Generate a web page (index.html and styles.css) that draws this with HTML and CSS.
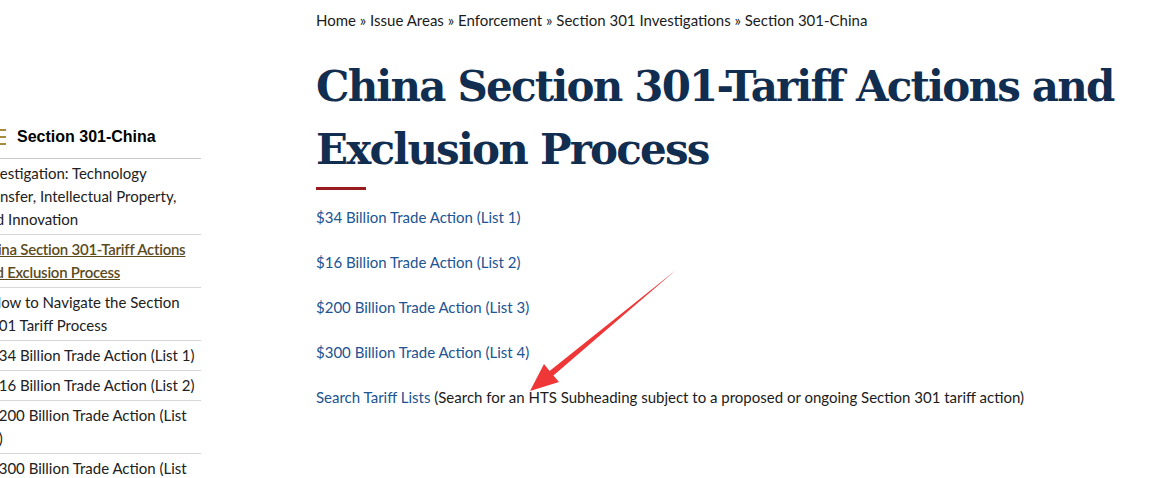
FILE: index.html
```html
<!DOCTYPE html>
<html lang="en">
<head>
    <meta charset="UTF-8">
    <meta name="viewport" content="width=device-width, initial-scale=1.0">
    <title>China Section 301-Tariff Actions and Exclusion Process</title>
    <link rel="stylesheet" href="styles.css">
</head>
<body>
    <div class="page">
        <aside class="sidenav">
            <div class="sidenav-title">
                <svg class="menu-icon" width="18" height="18" viewBox="0 0 18 18">
                    <rect x="0" y="1" width="18" height="2" fill="#a68b3c"/>
                    <rect x="0" y="8" width="18" height="2" fill="#a68b3c"/>
                    <rect x="0" y="15" width="18" height="2" fill="#a68b3c"/>
                </svg>
                <span>Section 301-China</span>
            </div>
            <ul class="nav-list">
                <li><a href="#">Investigation: Technology Transfer, Intellectual Property, and Innovation</a></li>
                <li class="current"><a href="#">China Section 301-Tariff Actions and Exclusion Process</a></li>
                <li class="child"><a href="#">How to Navigate the Section 301 Tariff Process</a></li>
                <li class="child"><a href="#">$34 Billion Trade Action (List 1)</a></li>
                <li class="child"><a href="#">$16 Billion Trade Action (List 2)</a></li>
                <li class="child"><a href="#">$200 Billion Trade Action (List 3)</a></li>
                <li class="child"><a href="#">$300 Billion Trade Action (List 4)</a></li>
            </ul>
        </aside>

        <main class="content">
            <div class="breadcrumb">
                <a href="#">Home</a> » <a href="#">Issue Areas</a> » <a href="#">Enforcement</a> » <a href="#">Section 301 Investigations</a> » Section 301-China
            </div>
            <h1>China Section 301-Tariff Actions and Exclusion Process</h1>
            <div class="rule"></div>
            <p><a href="#">$34 Billion Trade Action (List 1)</a></p>
            <p><a href="#">$16 Billion Trade Action (List 2)</a></p>
            <p><a href="#">$200 Billion Trade Action (List 3)</a></p>
            <p><a href="#">$300 Billion Trade Action (List 4)</a></p>
            <p><a href="#">Search Tariff Lists</a> (Search for an HTS Subheading subject to a proposed or ongoing Section 301 tariff action)</p>
        </main>
    </div>

    <!-- annotation arrow drawn over the page -->
    <svg class="arrow" width="1174" height="478" viewBox="0 0 1174 478">
        <polygon points="530,391 544,364 549.6,370.9 676,270 553.4,375.5 559,382" fill="#ef3737"/>
    </svg>
</body>
</html>
```

FILE: styles.css
```css
body {
    margin: 0;
    padding: 0;
    background: #fff;
    font-family: Lato, "Open Sans", sans-serif;
    font-size: 15px;
    color: #1b1b1b;
    overflow: hidden;
}

a {
    color: #205493;
    text-decoration: none;
}

.page {
    display: flex;
    align-items: flex-start;
}

/* side navigation */
.sidenav {
    flex: 0 0 225px;
    margin-left: -24px;
    margin-top: 120px;
    margin-right: 115px;
}

.sidenav-title {
    display: flex;
    align-items: center;
    gap: 11px;
    padding: 6px 0 10px 12px;
    border-bottom: 1px solid #c8c8c8;
    font-family: "Liberation Sans", Arial, sans-serif;
    font-weight: bold;
    font-size: 16px;
    line-height: 22px;
    color: #000;
}

.nav-list {
    list-style: none;
    margin: 0;
    padding: 0;
}

.nav-list li {
    border-bottom: 1px solid #d6d7d9;
    padding: 3px 0 3px 4px;
    line-height: 23px;
}

.nav-list li a {
    color: #212121;
}

.nav-list li.child {
    padding-left: 14px;
}

.nav-list li.current a {
    color: #5b4b1d;
    text-decoration: underline;
    font-weight: 600;
    letter-spacing: -0.25px;
}

/* main content */
.content {
    flex: 1;
    max-width: 830px;
    padding-top: 9px;
}

.breadcrumb {
    line-height: 22px;
}

.breadcrumb a {
    color: #1b1b1b;
}

h1 {
    font-family: "DejaVu Serif", Georgia, serif;
    font-weight: bold;
    font-size: 42px;
    letter-spacing: -1.8px;
    line-height: 63px;
    color: #112e51;
    margin: 24px 0 6px;
}

.rule {
    width: 50px;
    height: 3px;
    background: #981b1e;
    margin-bottom: 15px;
}

.content p {
    margin: 0 0 20px;
    line-height: 25px;
}

.arrow {
    position: absolute;
    top: 0;
    left: 0;
    pointer-events: none;
}
```
